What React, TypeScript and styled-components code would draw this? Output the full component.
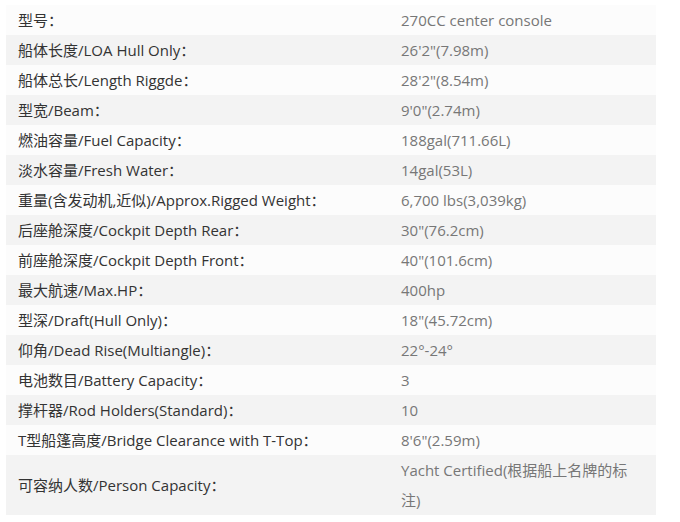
import React from 'react'
import styled, { createGlobalStyle } from 'styled-components'

const GlobalStyle = createGlobalStyle`
  body {
    margin: 0;
    background: #fff;
    font-family: "Open Sans", "Noto Sans CJK SC", sans-serif;
  }
`

const Page = styled.div`
  padding: 5px 24px 0 6px;
`

const SpecTable = styled.table`
  width: 650px;
  border-collapse: collapse;
  table-layout: fixed;
  font-size: 15px;
  line-height: 30px;
`

const Row = styled.tr<{ $shaded: boolean }>`
  background: ${({ $shaded }) => ($shaded ? '#f3f3f3' : '#fcfcfc')};
`

const LabelCell = styled.td`
  width: 371px;
  padding: 0 0 0 12px;
  color: #333;
  vertical-align: middle;
`

const ValueCell = styled.td`
  padding: 0 24px 0 12px;
  color: #777;
  vertical-align: middle;
`

const specs: [string, string][] = [
  ['型号：', '270CC center console'],
  ['船体长度/LOA Hull Only：', '26\'2"(7.98m)'],
  ['船体总长/Length Riggde：', '28\'2"(8.54m)'],
  ['型宽/Beam：', '9\'0"(2.74m)'],
  ['燃油容量/Fuel Capacity：', '188gal(711.66L)'],
  ['淡水容量/Fresh Water：', '14gal(53L)'],
  ['重量(含发动机,近似)/Approx.Rigged Weight：', '6,700 lbs(3,039kg)'],
  ['后座舱深度/Cockpit Depth Rear：', '30"(76.2cm)'],
  ['前座舱深度/Cockpit Depth Front：', '40"(101.6cm)'],
  ['最大航速/Max.HP：', '400hp'],
  ['型深/Draft(Hull Only)：', '18"(45.72cm)'],
  ['仰角/Dead Rise(Multiangle)：', '22°-24°'],
  ['电池数目/Battery Capacity：', '3'],
  ['撑杆器/Rod Holders(Standard)：', '10'],
  ['T型船篷高度/Bridge Clearance with T-Top：', '8\'6"(2.59m)'],
  ['可容纳人数/Person Capacity：', 'Yacht Certified(根据船上名牌的标注)'],
]

export default function App() {
  return (
    <>
      <GlobalStyle />
      <Page>
        <SpecTable>
          <tbody>
            {specs.map(([label, value], i) => (
              <Row key={label} $shaded={i % 2 === 1}>
                <LabelCell>{label}</LabelCell>
                <ValueCell>{value}</ValueCell>
              </Row>
            ))}
          </tbody>
        </SpecTable>
      </Page>
    </>
  )
}
